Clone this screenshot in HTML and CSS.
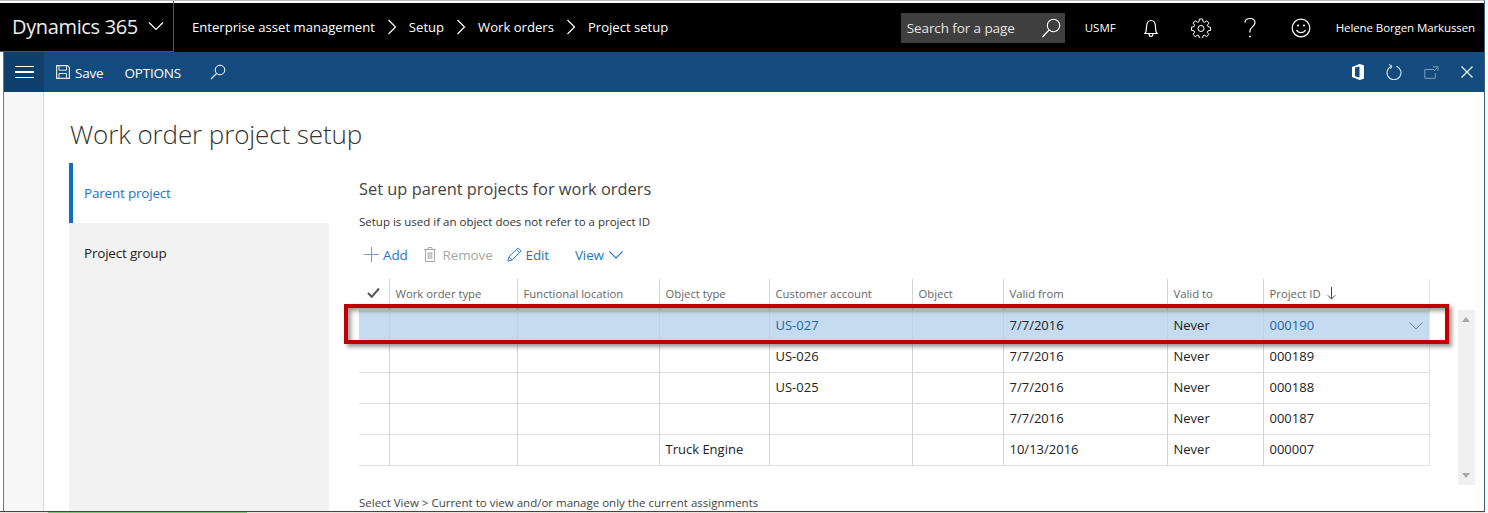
FILE: index.html
```html
<!DOCTYPE html>
<html>
<head>
  <title>Work order project setup</title>
  <link rel="stylesheet" href="styles.css">
</head>
<body>
  <div class="window">
    <!-- Top navigation -->
    <header class="topbar">
      <div class="brand">
        <span>Dynamics 365</span>
        <svg class="brand-chev" width="16" height="10" viewBox="0 0 16 10"><path d="M1 1.5l7 7 7-7" fill="none" stroke="#fff" stroke-width="1.2"/></svg>
      </div>
      <nav class="crumbs">
        <span>Enterprise asset management</span>
        <svg class="crumb-sep" width="10" height="16" viewBox="0 0 10 16"><path d="M1.5 1l7 7-7 7" fill="none" stroke="#fff" stroke-width="1.2"/></svg>
        <span>Setup</span>
        <svg class="crumb-sep" width="10" height="16" viewBox="0 0 10 16"><path d="M1.5 1l7 7-7 7" fill="none" stroke="#fff" stroke-width="1.2"/></svg>
        <span>Work orders</span>
        <svg class="crumb-sep" width="10" height="16" viewBox="0 0 10 16"><path d="M1.5 1l7 7-7 7" fill="none" stroke="#fff" stroke-width="1.2"/></svg>
        <span>Project setup</span>
      </nav>
      <div class="top-right">
        <div class="search">
          <span>Search for a page</span>
          <svg width="20" height="20" viewBox="0 0 20 20"><circle cx="12.5" cy="7.5" r="6.2" fill="none" stroke="#fff" stroke-width="1.1"/><path d="M8 12L1.5 19" stroke="#fff" stroke-width="1.2"/></svg>
        </div>
        <span class="company">USMF</span>
        <svg class="bell" width="16" height="20" viewBox="0 0 16 20"><path d="M2 15.5c1.3-1.5 1.5-3 1.5-6.5 0-4 1.8-6.5 4.500-6.500s4.500 2.500 4.500 6.500c0 3.500.2 5 1.500 6.500zM6 15.500c0 4 4 4 4 0" fill="none" stroke="#fff" stroke-width="1.200"/></svg>
        <svg class="gear" width="20" height="20" viewBox="0 0 20 20"><path d="M8.400 1h3.200l.4 2.600 1.500.7 2.200-1.500 2.200 2.300-1.500 2.100.6 1.500 2.500.5v3.200l-2.500.4-.7 1.500 1.500 2.200-2.200 2.200-2.100-1.500-1.500.6-.4 2.500H8.400L8 17.800l-1.500-.6-2.200 1.500-2.200-2.200 1.500-2.200-.6-1.500-2.500-.4V9.200l2.500-.5.600-1.500-1.500-2.100 2.200-2.300 2.200 1.500L8 3.600z" fill="none" stroke="#fff" stroke-width="1"/><circle cx="10" cy="10.500" r="3" fill="none" stroke="#fff"/></svg>
        <svg class="help" width="14" height="22" viewBox="0 0 14 22"><path d="M2 5.500C2 3 4 1.500 7 1.500s5 1.800 5 4.300c0 3.700-5 4-5 8.200v1.500" fill="none" stroke="#fff" stroke-width="1.200"/><circle cx="7" cy="19.500" r=".9" fill="#fff"/></svg>
        <svg class="smile" width="20" height="20" viewBox="0 0 20 20"><circle cx="10" cy="10" r="8.800" fill="none" stroke="#fff" stroke-width="1.200"/><circle cx="7" cy="7.500" r="1.100" fill="#fff"/><circle cx="13" cy="7.500" r="1.100" fill="#fff"/><path d="M5.500 12c1.800 3.400 7.200 3.400 9 0" fill="none" stroke="#fff" stroke-width="1.200"/></svg>
        <span class="user">Helene Borgen Markussen</span>
      </div>
    </header>

    <!-- Action pane -->
    <div class="actionbar">
      <div class="menu-tile"><span></span><span></span><span></span></div>
      <svg class="save-icon" width="14" height="14" viewBox="0 0 14 14"><path d="M.6.600h11l1.800 1.800v11H.6z" fill="none" stroke="#dfe8f0" stroke-width="1.200"/><path d="M3 .8v4.400h7.500V.8M3 13V8.500h7.500V13" fill="none" stroke="#dfe8f0"/></svg>
      <span class="action-save">Save</span>
      <span class="action-options">OPTIONS</span>
      <svg class="action-search" width="16" height="16" viewBox="0 0 16 16"><circle cx="10" cy="6" r="4.800" fill="none" stroke="#fff"/><path d="M6.500 9.500L1 15" stroke="#fff" stroke-width="1.100"/></svg>
      <div class="action-right">
        <svg width="12" height="16" viewBox="0 0 12 16"><path d="M0 3l7.500-3L12 1.200v13.600L7.500 16 0 13zM7.500 2.500L3 3.500v8.800l4.500 1.200z" fill="#fff" fill-rule="evenodd"/></svg>
        <svg width="16" height="16" viewBox="0 0 16 16"><path d="M5.500 2.200a7 7 0 1 0 5 0" fill="none" stroke="#dfe8f0" stroke-width="1.100"/><path d="M3 .5l3 1.500-1.500 2.800" fill="none" stroke="#dfe8f0"/></svg>
        <svg width="15" height="13" viewBox="0 0 15 13"><path d="M10 3.500H.8v8.800h10.500V7M9 .8h5v4M14 .8L10 5" fill="none" stroke="#7f9cb8"/></svg>
        <svg width="12" height="12" viewBox="0 0 12 12"><path d="M.5.500l11 11M11.500.500l-11 11" stroke="#fff" stroke-width="1.100"/></svg>
      </div>
    </div>

    <div class="main">
      <div class="rail"></div>
      <div class="content">
        <h1 class="page-title">Work order project setup</h1>
        <div class="columns">
          <ul class="side-nav">
            <li class="side-item side-item-active">Parent project</li>
            <li class="side-item">Project group</li>
          </ul>
          <section class="pane">
            <h2 class="pane-title">Set up parent projects for work orders</h2>
            <p class="note">Setup is used if an object does not refer to a project ID</p>
            <div class="toolbar">
              <span class="tool tool-add">
                <svg width="15" height="15" viewBox="0 0 15 15"><path d="M7.500 0v15M0 7.500h15" stroke="#7d9bd0" stroke-width="1.100"/></svg>Add
              </span>
              <span class="tool tool-off">
                <svg width="12" height="15" viewBox="0 0 12 15"><path d="M1.500 3v11.500h9V3M0 2.500h12M4 2.500V.6h4v1.900M4.200 5v7M6 5v7M7.800 5v7" fill="none" stroke="#a6a6a6"/></svg>Remove
              </span>
              <span class="tool tool-edit">
                <svg width="15" height="15" viewBox="0 0 15 15"><path d="M1 14l1-4.200L11 .9l3.100 3.100-9 9zM2 9.800L5.100 13M9.500 2.400l3.100 3.100" fill="none" stroke="#2d7fd0"/></svg>Edit
              </span>
              <span class="tool tool-view">View
                <svg width="14" height="8" viewBox="0 0 14 8"><path d="M.5.500L7 7 13.500.500" fill="none" stroke="#1f73c4" stroke-width="1.100"/></svg>
              </span>
            </div>
            <div class="grid-wrap">
              <table class="grid">
                <colgroup>
                  <col class="c1"><col class="c2"><col class="c3"><col class="c4"><col class="c5"><col class="c6"><col class="c7"><col class="c8"><col class="c9">
                </colgroup>
                <thead>
                  <tr>
                    <th class="check-col"><svg width="13" height="11" viewBox="0 0 13 11"><path d="M1 6l3.800 3.800L12 1.500" fill="none" stroke="#555" stroke-width="2"/></svg></th>
                    <th>Work order type</th>
                    <th>Functional location</th>
                    <th>Object type</th>
                    <th>Customer account</th>
                    <th>Object</th>
                    <th>Valid from</th>
                    <th>Valid to</th>
                    <th>Project ID <svg class="sort" width="9" height="13" viewBox="0 0 9 13"><path d="M4.500 0v12M.8 8.300l3.700 3.700 3.700-3.700" fill="none" stroke="#444"/></svg></th>
                  </tr>
                </thead>
                <tbody>
                  <tr class="selected">
                    <td></td><td></td><td></td><td></td>
                    <td class="link">US-027</td><td></td><td>7/7/2016</td><td>Never</td>
                    <td class="link lookup">000190<svg width="14" height="8" viewBox="0 0 14 8"><path d="M.5.500L7 7 13.500.500" fill="none" stroke="#6d7f90"/></svg></td>
                  </tr>
                  <tr><td></td><td></td><td></td><td></td><td>US-026</td><td></td><td>7/7/2016</td><td>Never</td><td>000189</td></tr>
                  <tr><td></td><td></td><td></td><td></td><td>US-025</td><td></td><td>7/7/2016</td><td>Never</td><td>000188</td></tr>
                  <tr><td></td><td></td><td></td><td></td><td></td><td></td><td>7/7/2016</td><td>Never</td><td>000187</td></tr>
                  <tr><td></td><td></td><td></td><td>Truck Engine</td><td></td><td></td><td>10/13/2016</td><td>Never</td><td>000007</td></tr>
                </tbody>
              </table>
              <div class="scrollbar">
                <span class="arrow-up"></span>
                <span class="arrow-down"></span>
              </div>
              <!-- red callout drawn over the first row -->
              <div class="callout"></div>
            </div>
            <p class="footnote">Select View &gt; Current to view and/or manage only the current assignments</p>
          </section>
        </div>
      </div>
    </div>
  </div>
  <div class="taskbar"><span class="task-green"></span></div>
</body>
</html>
```

FILE: styles.css
```css
* { box-sizing: border-box; }
html, body { margin: 0; height: 513px; overflow: hidden; }
body {
  background-color: #fff;
  font-family: 'Open Sans', 'Noto Sans', sans-serif;
  color: #222;
}

.window {
  width: 1485px;
  height: 511px;
  padding-top: 2px;
  border-top: 1px solid #bbb;
  border-right: 1px solid #3b5f80;
  display: flex;
  flex-direction: column;
  overflow: hidden;
}

/* --- Top navigation --- */
.topbar {
  flex: 0 0 49px;
  display: flex;
  align-items: center;
  background-color: #000;
  color: #fff;
  font-size: 13px;
}
.brand {
  width: 174px;
  height: 52px;
  margin-top: -3px;
  padding-left: 12px;
  display: flex;
  align-items: center;
  border: 1px solid #555;
  border-left: 0;
  font-size: 20px;
  letter-spacing: -0.35px;
  color: #eee;
}
.brand-chev { margin-left: 10px; }
.crumbs {
  margin: 0 0 2px 18px;
  display: flex;
  align-items: center;
  font-size: 13.1px;
}
.crumb-sep { margin: 0 12px; }
.top-right {
  margin-left: auto;
  display: flex;
  align-items: center;
}
.search {
  width: 164px;
  height: 30px;
  padding: 0 4px 0 6px;
  display: flex;
  align-items: center;
  justify-content: space-between;
  background-color: #3f3f3f;
  font-size: 13.5px;
  letter-spacing: -0.1px;
  color: #e4e4e4;
}
.company { margin-left: 20px; font-size: 11.5px; }
.bell { margin-left: 27px; }
.gear { margin-left: 32px; }
.help { margin-left: 32px; }
.smile { margin-left: 34px; }
.user { margin: 0 9px 0 25px; font-size: 11.5px; letter-spacing: -0.1px; }

/* --- Action pane --- */
.actionbar {
  flex: 0 0 40px;
  margin-left: 4px;
  display: flex;
  align-items: center;
  background-color: #134b7e;
  color: #fff;
  font-size: 13.5px;
  box-shadow: -1px 0 0 #2b88d8;
}
.menu-tile {
  width: 40px;
  height: 40px;
  display: flex;
  flex-direction: column;
  justify-content: center;
  align-items: center;
  gap: 4px;
  background-color: #0f3f6c;
}
.menu-tile span { width: 19px; height: 1.5px; background-color: #fff; }
.save-icon { margin-left: 12px; }
.action-save { margin: 2px 0 0 5px; letter-spacing: -0.2px; }
.action-options { margin: 2px 0 0 21px; letter-spacing: -0.2px; }
.action-search { margin-left: 29px; }
.action-right {
  margin-left: auto;
  padding-right: 11px;
  display: flex;
  align-items: center;
  gap: 22px;
}

/* --- Main area --- */
.main {
  flex: 1;
  margin-left: 4px;
  display: flex;
  min-height: 0;
  box-shadow: -1px 0 0 #2b88d8;
}
.rail {
  flex: 0 0 40px;
  background-color: #f7f7f7;
  border-right: 1px solid #d9d9d9;
}
.content { flex: 1; padding-left: 25px; min-width: 0; }
.page-title {
  margin: 25px 0 0 1px;
  height: 46px;
  font-size: 26px;
  line-height: 34px;
  font-weight: 300;
  letter-spacing: -0.1px;
  color: #333;
}
.columns { display: flex; }
.side-nav {
  flex: 0 0 260px;
  height: 350px;
  margin: 0;
  padding: 0;
  list-style: none;
  background-color: #f2f2f2;
  font-size: 13.5px;
}
.side-item {
  height: 60px;
  padding-left: 15px;
  display: flex;
  align-items: center;
  letter-spacing: -0.2px;
}
.side-item-active {
  background-color: #fff;
  border-left: 4px solid #106ebe;
  padding-left: 11px;
  color: #1f73c4;
}

.pane { flex: 1; padding-left: 30px; min-width: 0; }
.pane-title {
  margin: 15px 0 0;
  font-size: 16.4px;
  line-height: 22px;
  font-weight: 400;
  color: #444;
}
.note {
  margin: 14px 0 0;
  font-size: 11.5px;
  line-height: 16px;
  color: #333;
}
.toolbar {
  margin-top: 12px;
  height: 25px;
  display: flex;
  align-items: center;
  font-size: 13.5px;
  letter-spacing: -0.15px;
  color: #1f73c4;
}
.tool { display: flex; align-items: center; gap: 4px; margin-right: 16px; }
.tool-add { margin-left: 5px; }
.tool-off { color: #a6a6a6; gap: 7px; margin-right: 14px; }
.tool-edit { gap: 4px; }
.tool-view { margin-left: 10px; gap: 5px; }

.grid-wrap { position: relative; margin-top: 12px; display: flex; align-items: flex-start; }
.grid {
  width: 1070px;
  table-layout: fixed;
  border-collapse: collapse;
  font-size: 13px;
}
.c1 { width: 30px; }
.c2 { width: 128px; }
.c3 { width: 142px; }
.c4 { width: 110px; }
.c5 { width: 143px; }
.c6 { width: 91px; }
.c7 { width: 164px; }
.c8 { width: 96px; }
.c9 { width: 166px; }
.grid th {
  height: 31px;
  padding: 0 0 1px 6px;
  border-left: 1px solid #d4d4d4;
  font-size: 11.3px;
  font-weight: 400;
  text-align: left;
  color: #666;
  border-bottom: 1px solid #e3e3e3;
}
.grid th:first-child { border-left: 0; }
.grid th:last-child { border-right: 1px solid #e3e3e3; }
.grid .check-col { padding: 0 0 1px 8px; }
.sort { margin-left: 3px; vertical-align: -2px; }
.grid td {
  height: 31px;
  padding: 0 0 2px 6px;
  border-left: 1px solid #d4d4d4;
  border-bottom: 1px solid #e0e0e0;
}
.grid td:first-child { border-left: 0; }
.grid td:last-child { border-right: 1px solid #e3e3e3; }
.grid .selected td { background-color: #c5dcf0; border-bottom-color: #c5dcf0; border-left-color: #bcd3e8; }
.grid .link { color: #1d62ae; }
.lookup { position: relative; }
.lookup svg { position: absolute; right: 6px; top: 11px; }

.scrollbar {
  width: 17px;
  height: 175px;
  margin: 31px 0 0 28px;
  padding: 7px 0;
  display: flex;
  flex-direction: column;
  justify-content: space-between;
  align-items: center;
  background-color: #f0f0f0;
}
.arrow-up { border: 4px solid transparent; border-top: 0; border-bottom: 5px solid #a6a6a6; }
.arrow-down { border: 4px solid transparent; border-bottom: 0; border-top: 5px solid #a6a6a6; }

.callout {
  position: absolute;
  left: -15px;
  top: 25px;
  width: 1105px;
  height: 40px;
  border: 4px solid #c00000;
  box-shadow: 3px 3px 4px rgba(60, 60, 60, 0.5), inset 3px 3px 4px rgba(60, 60, 60, 0.5);
}
.footnote {
  margin: 11px 0 0;
  font-size: 11.5px;
  line-height: 14px;
  color: #444;
}

/* --- Sliver of desktop under the window --- */
.taskbar {
  width: 1485px;
  height: 2px;
  padding-left: 48px;
  display: flex;
  border-top: 1px solid #444;
  background-color: #e8e4dc;
}
.task-green { width: 199px; background-color: #7cc576; }
```
